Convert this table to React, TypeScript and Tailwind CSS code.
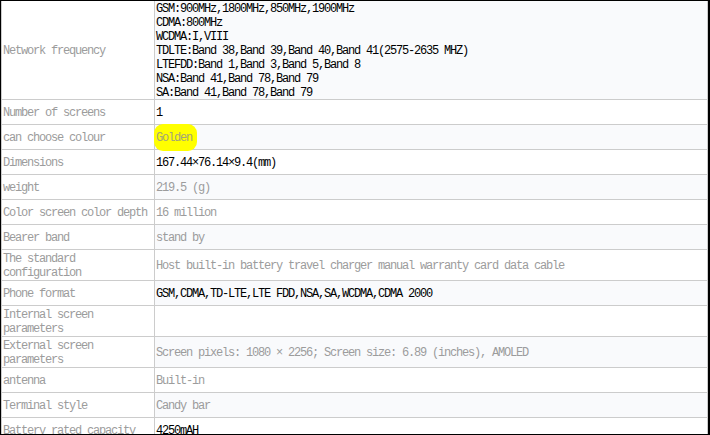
import React from "react";

type Row = { label: string[]; value: React.ReactNode; dark?: boolean };

const Golden = () => (
  <span className="relative inline-block">
    <span className="absolute -left-[2px] -right-[5px] -top-[7px] -bottom-[6px] bg-[#ffff00] rounded-[9px]" />
    <span className="relative text-[#a3a37a]">Golden</span>
  </span>
);

const rows: Row[] = [
  {
    label: ["Network frequency"],
    dark: true,
    value: (
      <>
        <div>GSM:900MHz,1800MHz,850MHz,1900MHz</div>
        <div>CDMA:800MHz</div>
        <div>WCDMA:I,VIII</div>
        <div>TDLTE:Band 38,Band 39,Band 40,Band 41(2575-2635 MHZ)</div>
        <div>LTEFDD:Band 1,Band 3,Band 5,Band 8</div>
        <div>NSA:Band 41,Band 78,Band 79</div>
        <div>SA:Band 41,Band 78,Band 79</div>
      </>
    ),
  },
  { label: ["Number of screens"], value: "1", dark: true },
  { label: ["can choose colour"], value: <Golden /> },
  { label: ["Dimensions"], value: "167.44×76.14×9.4(mm)", dark: true },
  { label: ["weight"], value: "219.5 (g)" },
  { label: ["Color screen color depth"], value: "16 million" },
  { label: ["Bearer band"], value: "stand by" },
  {
    label: ["The standard", "configuration"],
    value: "Host built-in battery travel charger manual warranty card data cable",
  },
  { label: ["Phone format"], value: "GSM,CDMA,TD-LTE,LTE FDD,NSA,SA,WCDMA,CDMA 2000", dark: true },
  { label: ["Internal screen", "parameters"], value: "" },
  {
    label: ["External screen", "parameters"],
    value: "Screen pixels: 1080 × 2256; Screen size: 6.89 (inches), AMOLED",
  },
  { label: ["antenna"], value: "Built-in" },
  { label: ["Terminal style"], value: "Candy bar" },
  { label: ["Battery rated capacity"], value: "4250mAH", dark: true },
];

export default function App() {
  return (
    <div
      className="w-[710px] h-[435px] overflow-hidden bg-white border-t border-l border-b border-r-2 border-black text-[12px] leading-[14px] tracking-[-1.2px]"
      style={{ fontFamily: '"Liberation Mono", "DejaVu Sans Mono", monospace' }}
    >
      <div className="border-l border-[#cccccc] h-full">
        {rows.map((r, i) => {
          const two = r.label.length > 1;
          return (
            <div key={i} className="grid grid-cols-[153px_1fr]">
              <div
                className={`border-r border-b border-[#cccccc] min-h-[25px] flex flex-col justify-center pl-px text-[#9c9c9c] whitespace-pre bg-white ${
                  two ? "py-px" : ""
                }`}
              >
                <div className="relative top-px">
                  {r.label.map((l, j) => (
                    <div key={j}>{l}</div>
                  ))}
                </div>
              </div>
              <div
                className={`border-r border-b border-[#cccccc] min-h-[25px] flex flex-col justify-center pl-px whitespace-pre ${
                  i % 2 === 0 ? "bg-[#f9fafc]" : "bg-white"
                } ${r.dark ? "text-black" : "text-[#9c9c9c]"}`}
              >
                <div className="relative top-px">{r.value}</div>
              </div>
            </div>
          );
        })}
      </div>
    </div>
  );
}
